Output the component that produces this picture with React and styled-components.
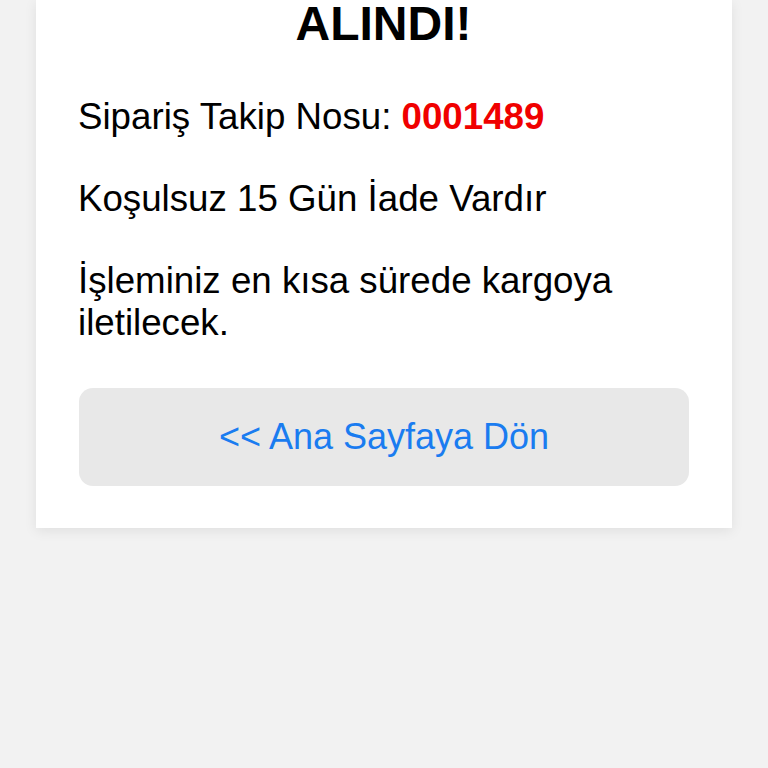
import styled, { createGlobalStyle } from "styled-components";

const GlobalStyle = createGlobalStyle`
  html, body {
    margin: 0;
    padding: 0;
    background: #f2f2f2;
    font-family: "Liberation Sans", Arial, Helvetica, sans-serif;
  }
`;

const App = () => {
  return (
    <>
      <GlobalStyle />
      <Page>
        <Card>
          <Title>ALINDI!</Title>
          <Line>
            Sipariş Takip Nosu: <OrderNo>0001489</OrderNo>
          </Line>
          <Line>Koşulsuz 15 Gün İade Vardır</Line>
          <Line>İşleminiz en kısa sürede kargoya iletilecek.</Line>
          <HomeButton type='button'>&lt;&lt; Ana Sayfaya Dön</HomeButton>
        </Card>
      </Page>
    </>
  );
};

export default App;

const Page = styled.div`
  min-height: 768px;
  padding: 0 36px;
  overflow: hidden;
`;

const Card = styled.div`
  display: flex;
  flex-direction: column;
  padding: 0 43px 42px 42px;
  background: #ffffff;
  box-shadow: 0 3px 12px rgba(0, 0, 0, 0.08);
`;

const Title = styled.h1`
  margin: 0 0 48px;
  font-size: 48px;
  line-height: 48px;
  font-weight: 700;
  text-align: center;
  color: #000;
`;

const Line = styled.p`
  margin: 0 0 40px;
  font-size: 36.7px;
  line-height: 42px;
  color: #000;

  &:last-of-type {
    margin-bottom: 44px;
  }
`;

const OrderNo = styled.span`
  color: #f00000;
  font-weight: 700;
`;

const HomeButton = styled.button`
  display: flex;
  align-items: center;
  justify-content: center;
  height: 98px;
  margin-left: 1px;
  padding: 0;
  border: none;
  border-radius: 14px;
  background: #e8e8e8;
  color: #1a7cf0;
  font-family: inherit;
  font-size: 36px;
  line-height: 42px;
  cursor: pointer;
`;
